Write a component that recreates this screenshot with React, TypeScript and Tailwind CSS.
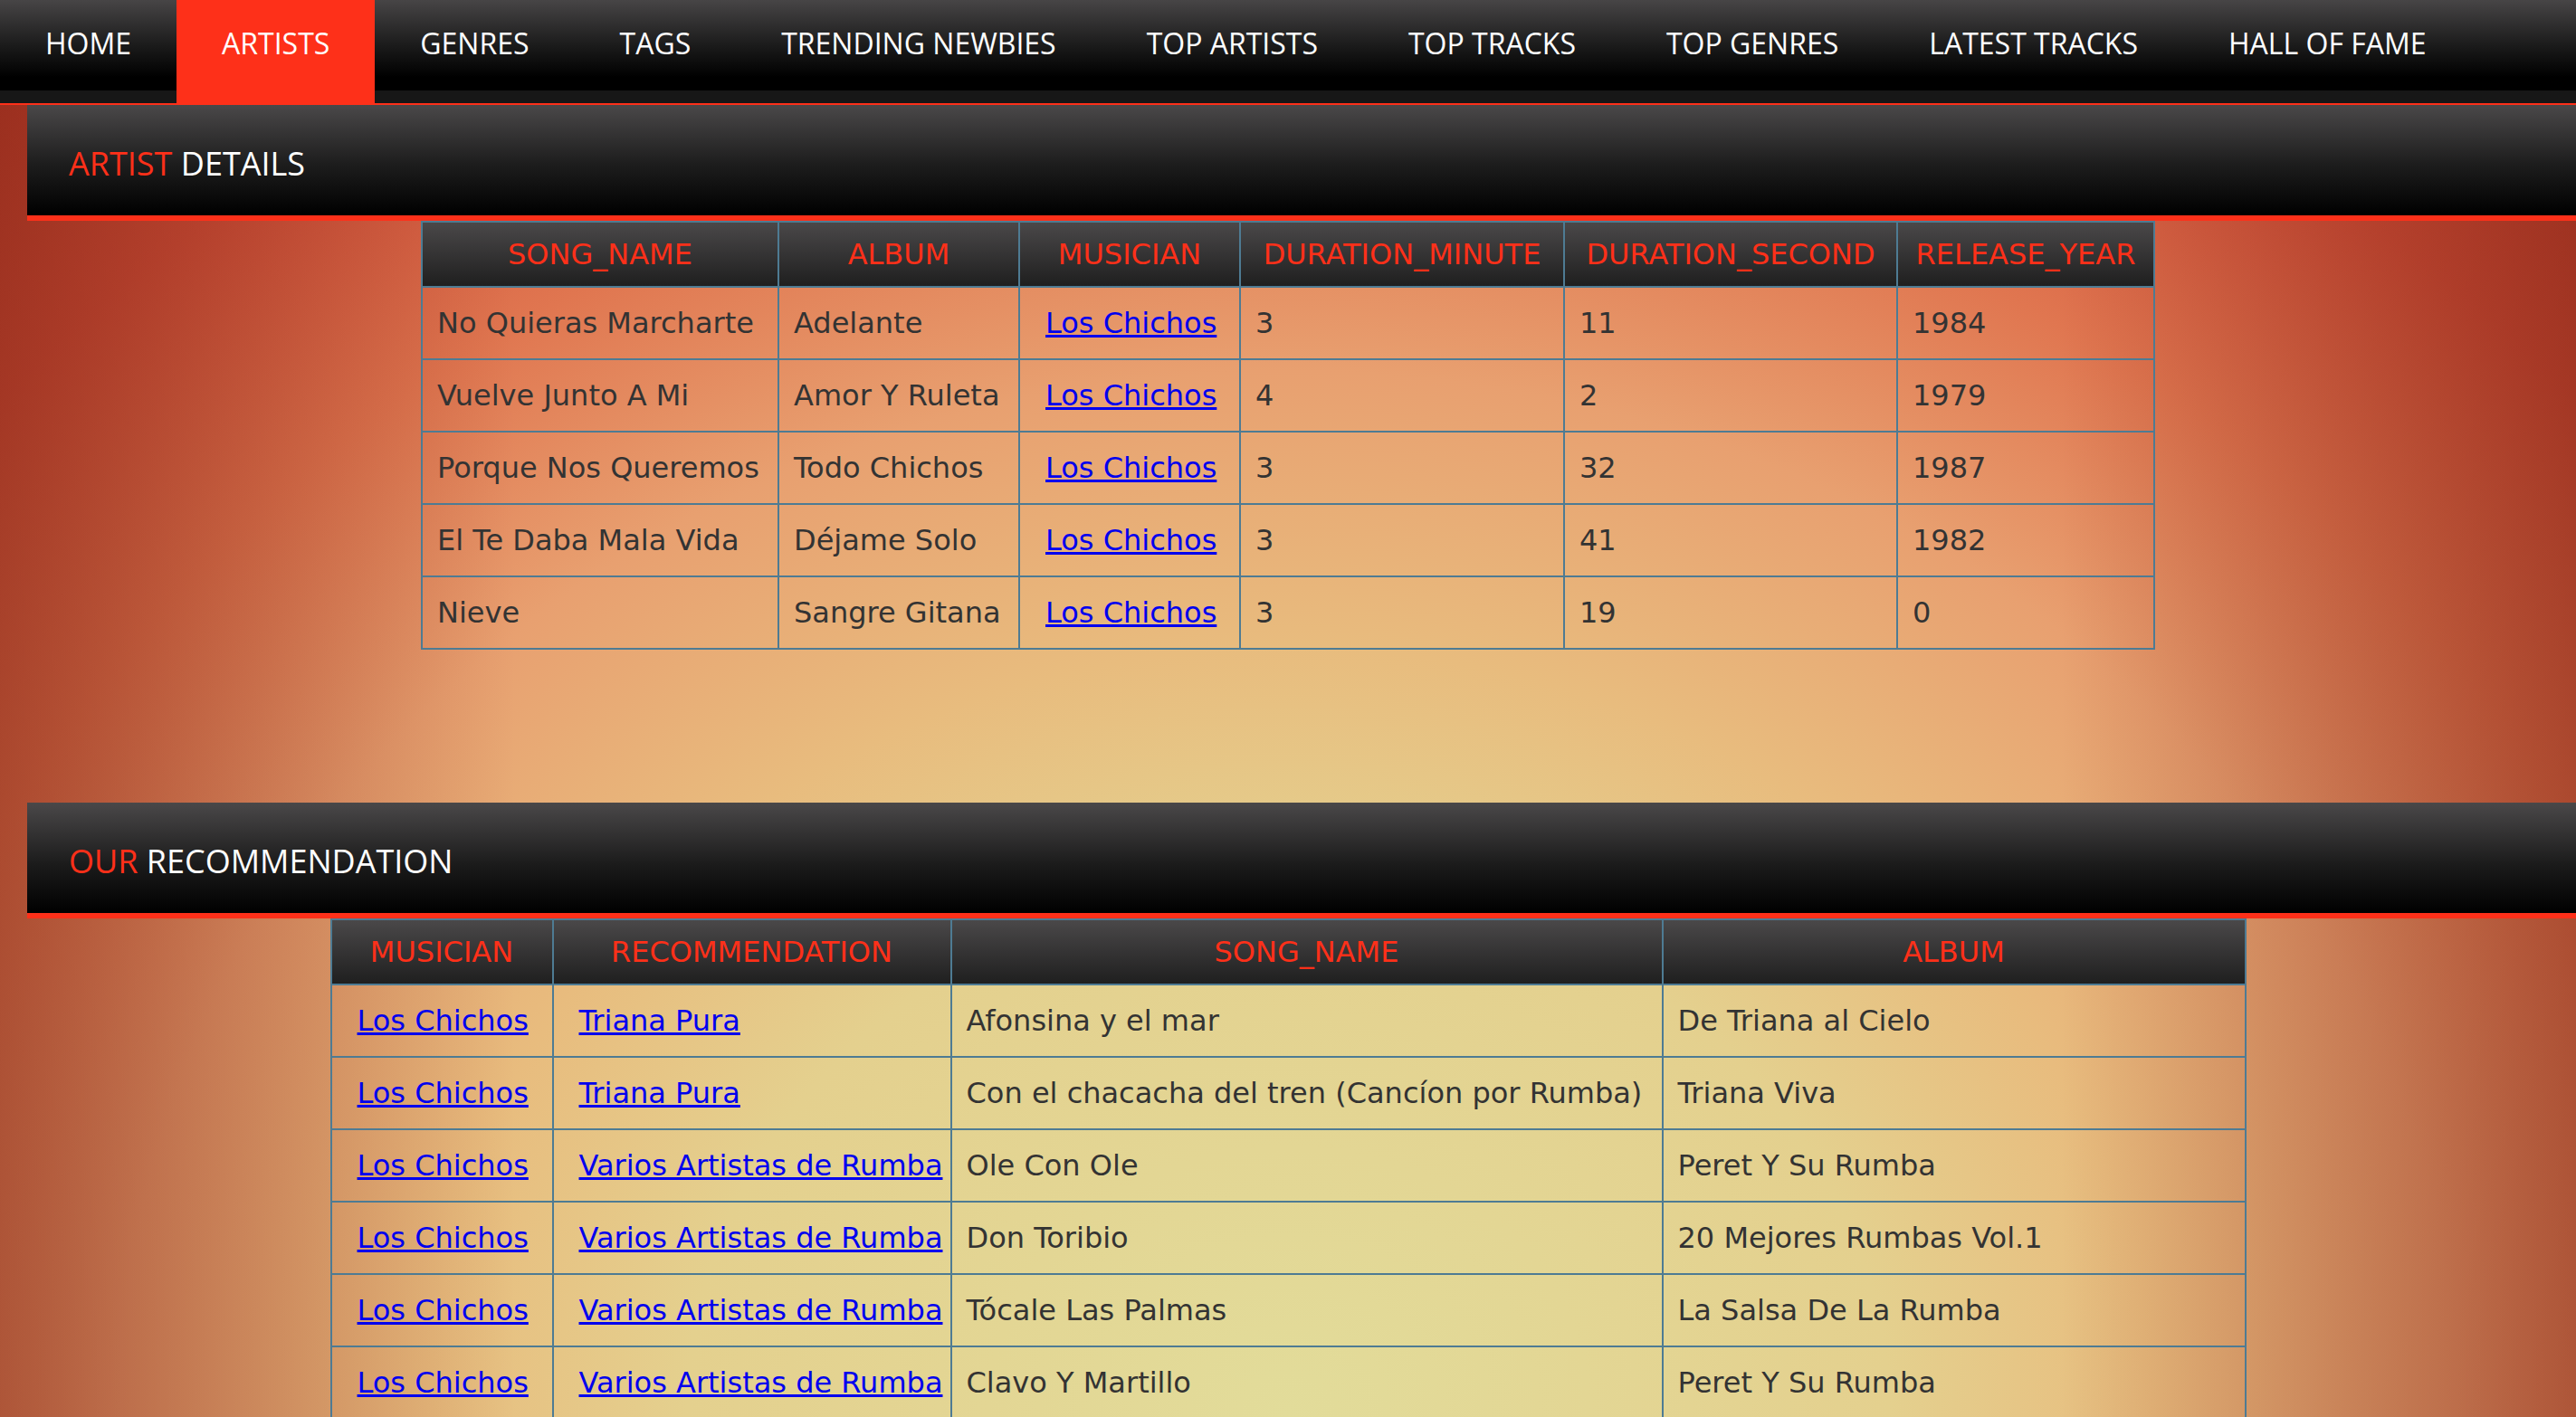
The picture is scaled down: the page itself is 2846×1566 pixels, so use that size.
import React from 'react';

const navItems = [
  'HOME',
  'ARTISTS',
  'GENRES',
  'TAGS',
  'TRENDING NEWBIES',
  'TOP ARTISTS',
  'TOP TRACKS',
  'TOP GENRES',
  'LATEST TRACKS',
  'HALL OF FAME',
];

const songs = [
  { name: 'No Quieras Marcharte', album: 'Adelante', min: '3', sec: '11', year: '1984' },
  { name: 'Vuelve Junto A Mi', album: 'Amor Y Ruleta', min: '4', sec: '2', year: '1979' },
  { name: 'Porque Nos Queremos', album: 'Todo Chichos', min: '3', sec: '32', year: '1987' },
  { name: 'El Te Daba Mala Vida', album: 'Déjame Solo', min: '3', sec: '41', year: '1982' },
  { name: 'Nieve', album: 'Sangre Gitana', min: '3', sec: '19', year: '0' },
];

const recs = [
  { rec: 'Triana Pura', song: 'Afonsina y el mar', album: 'De Triana al Cielo' },
  { rec: 'Triana Pura', song: 'Con el chacacha del tren (Cancíon por Rumba)', album: 'Triana Viva' },
  { rec: 'Varios Artistas de Rumba', song: 'Ole Con Ole', album: 'Peret Y Su Rumba' },
  { rec: 'Varios Artistas de Rumba', song: 'Don Toribio', album: '20 Mejores Rumbas Vol.1' },
  { rec: 'Varios Artistas de Rumba', song: 'Tócale Las Palmas', album: 'La Salsa De La Rumba' },
  { rec: 'Varios Artistas de Rumba', song: 'Clavo Y Martillo', album: 'Peret Y Su Rumba' },
];

const th =
  'h-[72px] border-2 border-[#4e7b93] bg-[linear-gradient(to_bottom,#4a4849,#1f1f1f)] text-center font-normal text-[#fe3019] whitespace-nowrap';
const td = 'h-[80px] border-2 border-[#4e7b93] px-4 text-left text-[#333] whitespace-nowrap';
const tdLink = 'h-[80px] border-2 border-[#4e7b93] pl-[28px] pr-2 text-left whitespace-nowrap';
const link = 'text-[#0000ee] underline';

const SectionHeader: React.FC<{ red: string; white: string }> = ({ red, white }) => (
  <div className="ml-[30px] h-[128px] border-b-[6px] border-[#fe3019] bg-[linear-gradient(to_bottom,#4a4849_0%,#1c1c1c_55%,#000_100%)] pl-[46px] pt-[38px]">
    <h2 className="font-['Open_Sans',sans-serif] text-[36px] leading-normal text-white">
      <span className="text-[#fe3019]">{red}</span> {white}
    </h2>
  </div>
);

const App: React.FC = () => {
  return (
    <div className="min-h-screen bg-fixed bg-[linear-gradient(to_right,rgba(120,30,15,0.5)_0%,rgba(120,30,15,0)_20%,rgba(120,30,15,0)_80%,rgba(120,30,15,0.5)_100%),radial-gradient(1900px_1700px_at_50%_100%,#e2dc9a_0%,#e4d08e_35%,#e8bc7e_50%,#e8a070_68%,#e07650_84%,#d0503a_100%,#b83a2a_120%)]">
      {/* Navegação principal */}
      <nav className="h-[116px] border-b-2 border-[#fe3019] bg-[linear-gradient(to_bottom,#474546_0%,#1a1a1a_45%,#000_75%,#000_87.7%,#171717_87.7%,#171717_100%)]">
        <ul className="flex h-full font-['Open_Sans',sans-serif] text-[32px] leading-normal text-white">
          {navItems.map((item) => (
            <li
              key={item}
              className={`h-full px-[50px] pt-[24px] whitespace-nowrap ${item === 'ARTISTS' ? 'bg-[#fe3019]' : ''}`}
            >
              {item}
            </li>
          ))}
        </ul>
      </nav>

      <SectionHeader red="ARTIST" white="DETAILS" />

      <table className="mx-auto w-[1914px] table-fixed border-collapse font-['DejaVu_Sans',Verdana,sans-serif] text-[32px]">
        <thead>
          <tr>
            <th className={`${th} w-[394px]`}>SONG_NAME</th>
            <th className={`${th} w-[266px]`}>ALBUM</th>
            <th className={`${th} w-[244px]`}>MUSICIAN</th>
            <th className={`${th} w-[358px]`}>DURATION_MINUTE</th>
            <th className={`${th} w-[368px]`}>DURATION_SECOND</th>
            <th className={`${th} w-[284px]`}>RELEASE_YEAR</th>
          </tr>
        </thead>
        <tbody>
          {songs.map((s) => (
            <tr key={s.name}>
              <td className={td}>{s.name}</td>
              <td className={td}>{s.album}</td>
              <td className={tdLink}>
                <a href="#" className={link}>Los Chichos</a>
              </td>
              <td className={td}>{s.min}</td>
              <td className={td}>{s.sec}</td>
              <td className={td}>{s.year}</td>
            </tr>
          ))}
        </tbody>
      </table>

      <div className="mt-[169px]">
        <SectionHeader red="OUR" white="RECOMMENDATION" />
      </div>

      <table className="mx-auto w-[2115px] table-fixed border-collapse font-['DejaVu_Sans',Verdana,sans-serif] text-[32px]">
        <thead>
          <tr>
            <th className={`${th} w-[245px]`}>MUSICIAN</th>
            <th className={`${th} w-[440px]`}>RECOMMENDATION</th>
            <th className={`${th} w-[786px]`}>SONG_NAME</th>
            <th className={`${th} w-[644px]`}>ALBUM</th>
          </tr>
        </thead>
        <tbody>
          {recs.map((r, i) => (
            <tr key={i}>
              <td className={tdLink}>
                <a href="#" className={link}>Los Chichos</a>
              </td>
              <td className={tdLink}>
                <a href="#" className={link}>{r.rec}</a>
              </td>
              <td className={td}>{r.song}</td>
              <td className={td}>{r.album}</td>
            </tr>
          ))}
        </tbody>
      </table>
    </div>
  );
};

export default App;
